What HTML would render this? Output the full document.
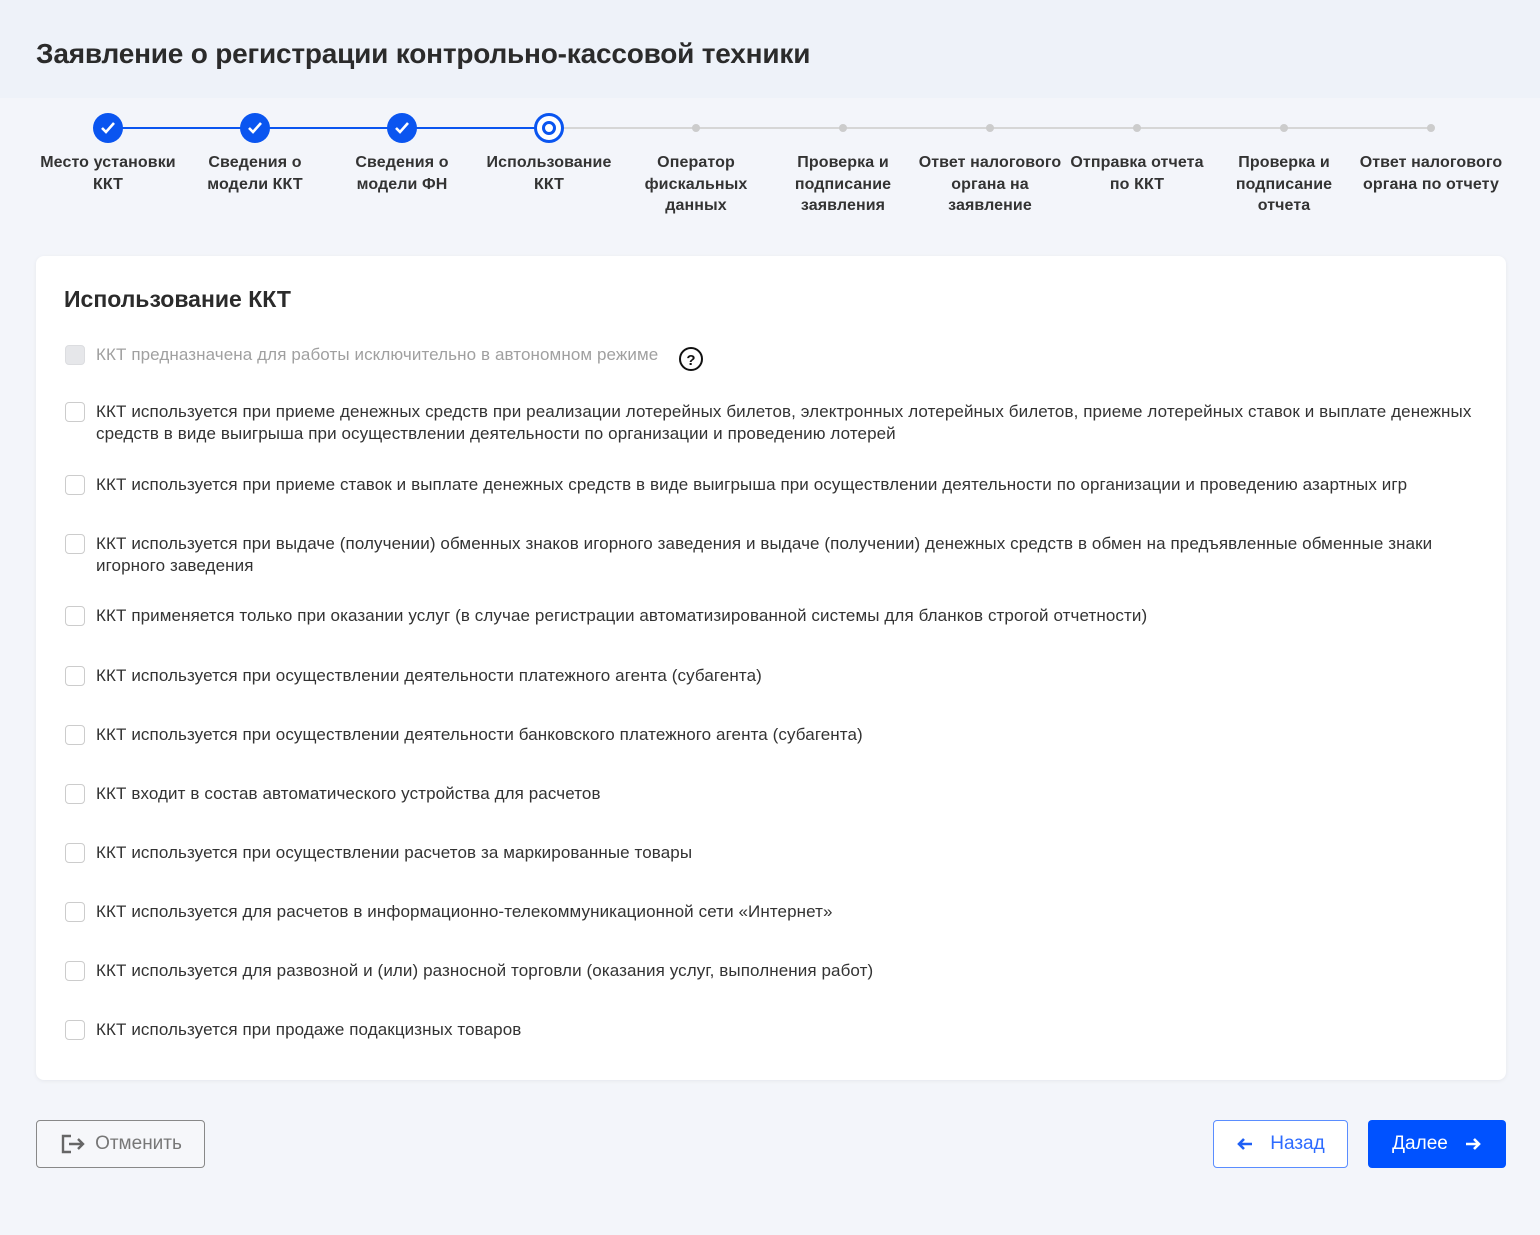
<!DOCTYPE html>
<html><head><meta charset="utf-8"><style>
*{box-sizing:border-box;margin:0;padding:0}
body{width:1540px;height:1235px;background:#f3f5fa;font-family:"Liberation Sans",Arial,sans-serif;color:#333;position:relative;overflow:hidden}
.hdr{position:absolute;left:0;top:0;width:1540px;height:98px;background:#eef2f9}
h1{position:absolute;left:36px;top:38px;font-size:28px;font-weight:bold;color:#2b2b2b;letter-spacing:-0.2px}
.line{position:absolute;top:127px;height:2px}
.c{position:absolute;width:30px;height:30px;border-radius:50%;top:113px;background:#0a55f0}
.c svg{position:absolute;left:7px;top:8px}
.cur{background:#fff;border:3px solid #0a55f0}
.cur:after{content:"";position:absolute;left:5px;top:5px;width:8px;height:8px;border:3px solid #0a55f0;border-radius:50%}
.dot{position:absolute;width:8px;height:8px;border-radius:50%;background:#ccc;top:124px}
.lab{position:absolute;top:152px;width:160px;text-align:center;font-size:16px;letter-spacing:0.1px;font-weight:bold;line-height:21.5px;color:#333}
.card{position:absolute;left:36px;top:256px;width:1470px;height:824px;background:#fff;border-radius:8px;box-shadow:0 1px 4px rgba(0,0,0,.06)}
h2{position:absolute;left:64px;top:286px;font-size:23px;font-weight:bold;color:#2b2b2b}
.row{position:absolute;left:64px;width:1420px}
.cb{position:absolute;left:1px;top:0px;width:20px;height:20px;border:1.5px solid #ccc;border-radius:4px;background:#fff}
.t{position:absolute;left:32px;top:-1px;width:1382px;font-size:17px;letter-spacing:0.1px;line-height:21.5px;color:#333}
.btn{position:absolute;top:1120px;height:48px;border-radius:4px;font-size:19px;display:flex;align-items:center;justify-content:center}
</style></head><body>
<div class="hdr"></div>
<h1>Заявление о регистрации контрольно-кассовой техники</h1>
<div class="line" style="left:108px;width:441px;background:#0a55f0"></div>
<div class="line" style="left:549px;width:882px;background:#d6d6d6"></div>
<div class="c" style="left:93px"><svg width="16" height="14" viewBox="0 0 16 14"><path d="M2 7l4 4 8-9" fill="none" stroke="#fff" stroke-width="2.6"/></svg></div>
<div class="c" style="left:240px"><svg width="16" height="14" viewBox="0 0 16 14"><path d="M2 7l4 4 8-9" fill="none" stroke="#fff" stroke-width="2.6"/></svg></div>
<div class="c" style="left:387px"><svg width="16" height="14" viewBox="0 0 16 14"><path d="M2 7l4 4 8-9" fill="none" stroke="#fff" stroke-width="2.6"/></svg></div>
<div class="c cur" style="left:534px"></div>
<div class="dot" style="left:692px"></div><div class="dot" style="left:839px"></div><div class="dot" style="left:986px"></div><div class="dot" style="left:1133px"></div><div class="dot" style="left:1280px"></div><div class="dot" style="left:1427px"></div>
<div class="lab" style="left:28px">Место установки<br>ККТ</div>
<div class="lab" style="left:175px">Сведения о<br>модели ККТ</div>
<div class="lab" style="left:322px">Сведения о<br>модели ФН</div>
<div class="lab" style="left:469px">Использование<br>ККТ</div>
<div class="lab" style="left:616px">Оператор<br>фискальных<br>данных</div>
<div class="lab" style="left:763px">Проверка и<br>подписание<br>заявления</div>
<div class="lab" style="left:908px;width:164px">Ответ налогового<br>органа на<br>заявление</div>
<div class="lab" style="left:1057px">Отправка отчета<br>по ККТ</div>
<div class="lab" style="left:1204px">Проверка и<br>подписание<br>отчета</div>
<div class="lab" style="left:1349px;width:164px">Ответ налогового<br>органа по отчету</div>

<div class="card"></div>
<h2>Использование ККТ</h2>
<div class="row" style="top:345px"><div class="cb" style="background:#e6e7ea;border-color:#dcdde0"></div><div class="t" style="color:#a0a0a0;width:auto">ККТ предназначена для работы исключительно в автономном режиме</div>
<svg style="position:absolute;left:614px;top:1px" width="26" height="26" viewBox="0 0 26 26"><circle cx="13" cy="13" r="11" fill="none" stroke="#111" stroke-width="2"/><text x="13" y="19" text-anchor="middle" font-family="Liberation Sans" font-weight="bold" font-size="15" fill="#111">?</text></svg></div>
<div class="row" style="top:402px"><div class="cb"></div><div class="t">ККТ используется при приеме денежных средств при реализации лотерейных билетов, электронных лотерейных билетов, приеме лотерейных ставок и выплате денежных средств в виде выигрыша при осуществлении деятельности по организации и проведению лотерей</div></div>
<div class="row" style="top:475px"><div class="cb"></div><div class="t">ККТ используется при приеме ставок и выплате денежных средств в виде выигрыша при осуществлении деятельности по организации и проведению азартных игр</div></div>
<div class="row" style="top:534px"><div class="cb"></div><div class="t">ККТ используется при выдаче (получении) обменных знаков игорного заведения и выдаче (получении) денежных средств в обмен на предъявленные обменные знаки игорного заведения</div></div>
<div class="row" style="top:606px"><div class="cb"></div><div class="t">ККТ применяется только при оказании услуг (в случае регистрации автоматизированной системы для бланков строгой отчетности)</div></div>
<div class="row" style="top:666px"><div class="cb"></div><div class="t">ККТ используется при осуществлении деятельности платежного агента (субагента)</div></div>
<div class="row" style="top:725px"><div class="cb"></div><div class="t">ККТ используется при осуществлении деятельности банковского платежного агента (субагента)</div></div>
<div class="row" style="top:784px"><div class="cb"></div><div class="t">ККТ входит в состав автоматического устройства для расчетов</div></div>
<div class="row" style="top:843px"><div class="cb"></div><div class="t">ККТ используется при осуществлении расчетов за маркированные товары</div></div>
<div class="row" style="top:902px"><div class="cb"></div><div class="t">ККТ используется для расчетов в информационно-телекоммуникационной сети «Интернет»</div></div>
<div class="row" style="top:961px"><div class="cb"></div><div class="t">ККТ используется для развозной и (или) разносной торговли (оказания услуг, выполнения работ)</div></div>
<div class="row" style="top:1020px"><div class="cb"></div><div class="t">ККТ используется при продаже подакцизных товаров</div></div>

<div class="btn" style="left:36px;width:169px;border:1.5px solid #888;color:#777;background:#f6f7fa">
<svg width="28" height="24" viewBox="0 0 28 24" style="margin-right:8px"><path d="M12 4H4v16h8" fill="none" stroke="#666" stroke-width="2.4"/><path d="M10 12h14M19 7l5 5-5 5" fill="none" stroke="#666" stroke-width="2.4"/></svg>Отменить</div>
<div class="btn" style="left:1213px;width:135px;border:1.5px solid #5a8dff;color:#2d6bff;background:#fff">
<svg width="18" height="16" viewBox="0 0 18 16" style="margin-right:16px"><path d="M16 8H3M8 3L3 8l5 5" fill="none" stroke="#1e5ff5" stroke-width="2.6"/></svg>Назад</div>
<div class="btn" style="left:1368px;width:138px;background:#0052ff;color:#fff">Далее
<svg width="18" height="16" viewBox="0 0 18 16" style="margin-left:16px"><path d="M2 8h13M10 3l5 5-5 5" fill="none" stroke="#fff" stroke-width="2.6"/></svg></div>
</body></html>
